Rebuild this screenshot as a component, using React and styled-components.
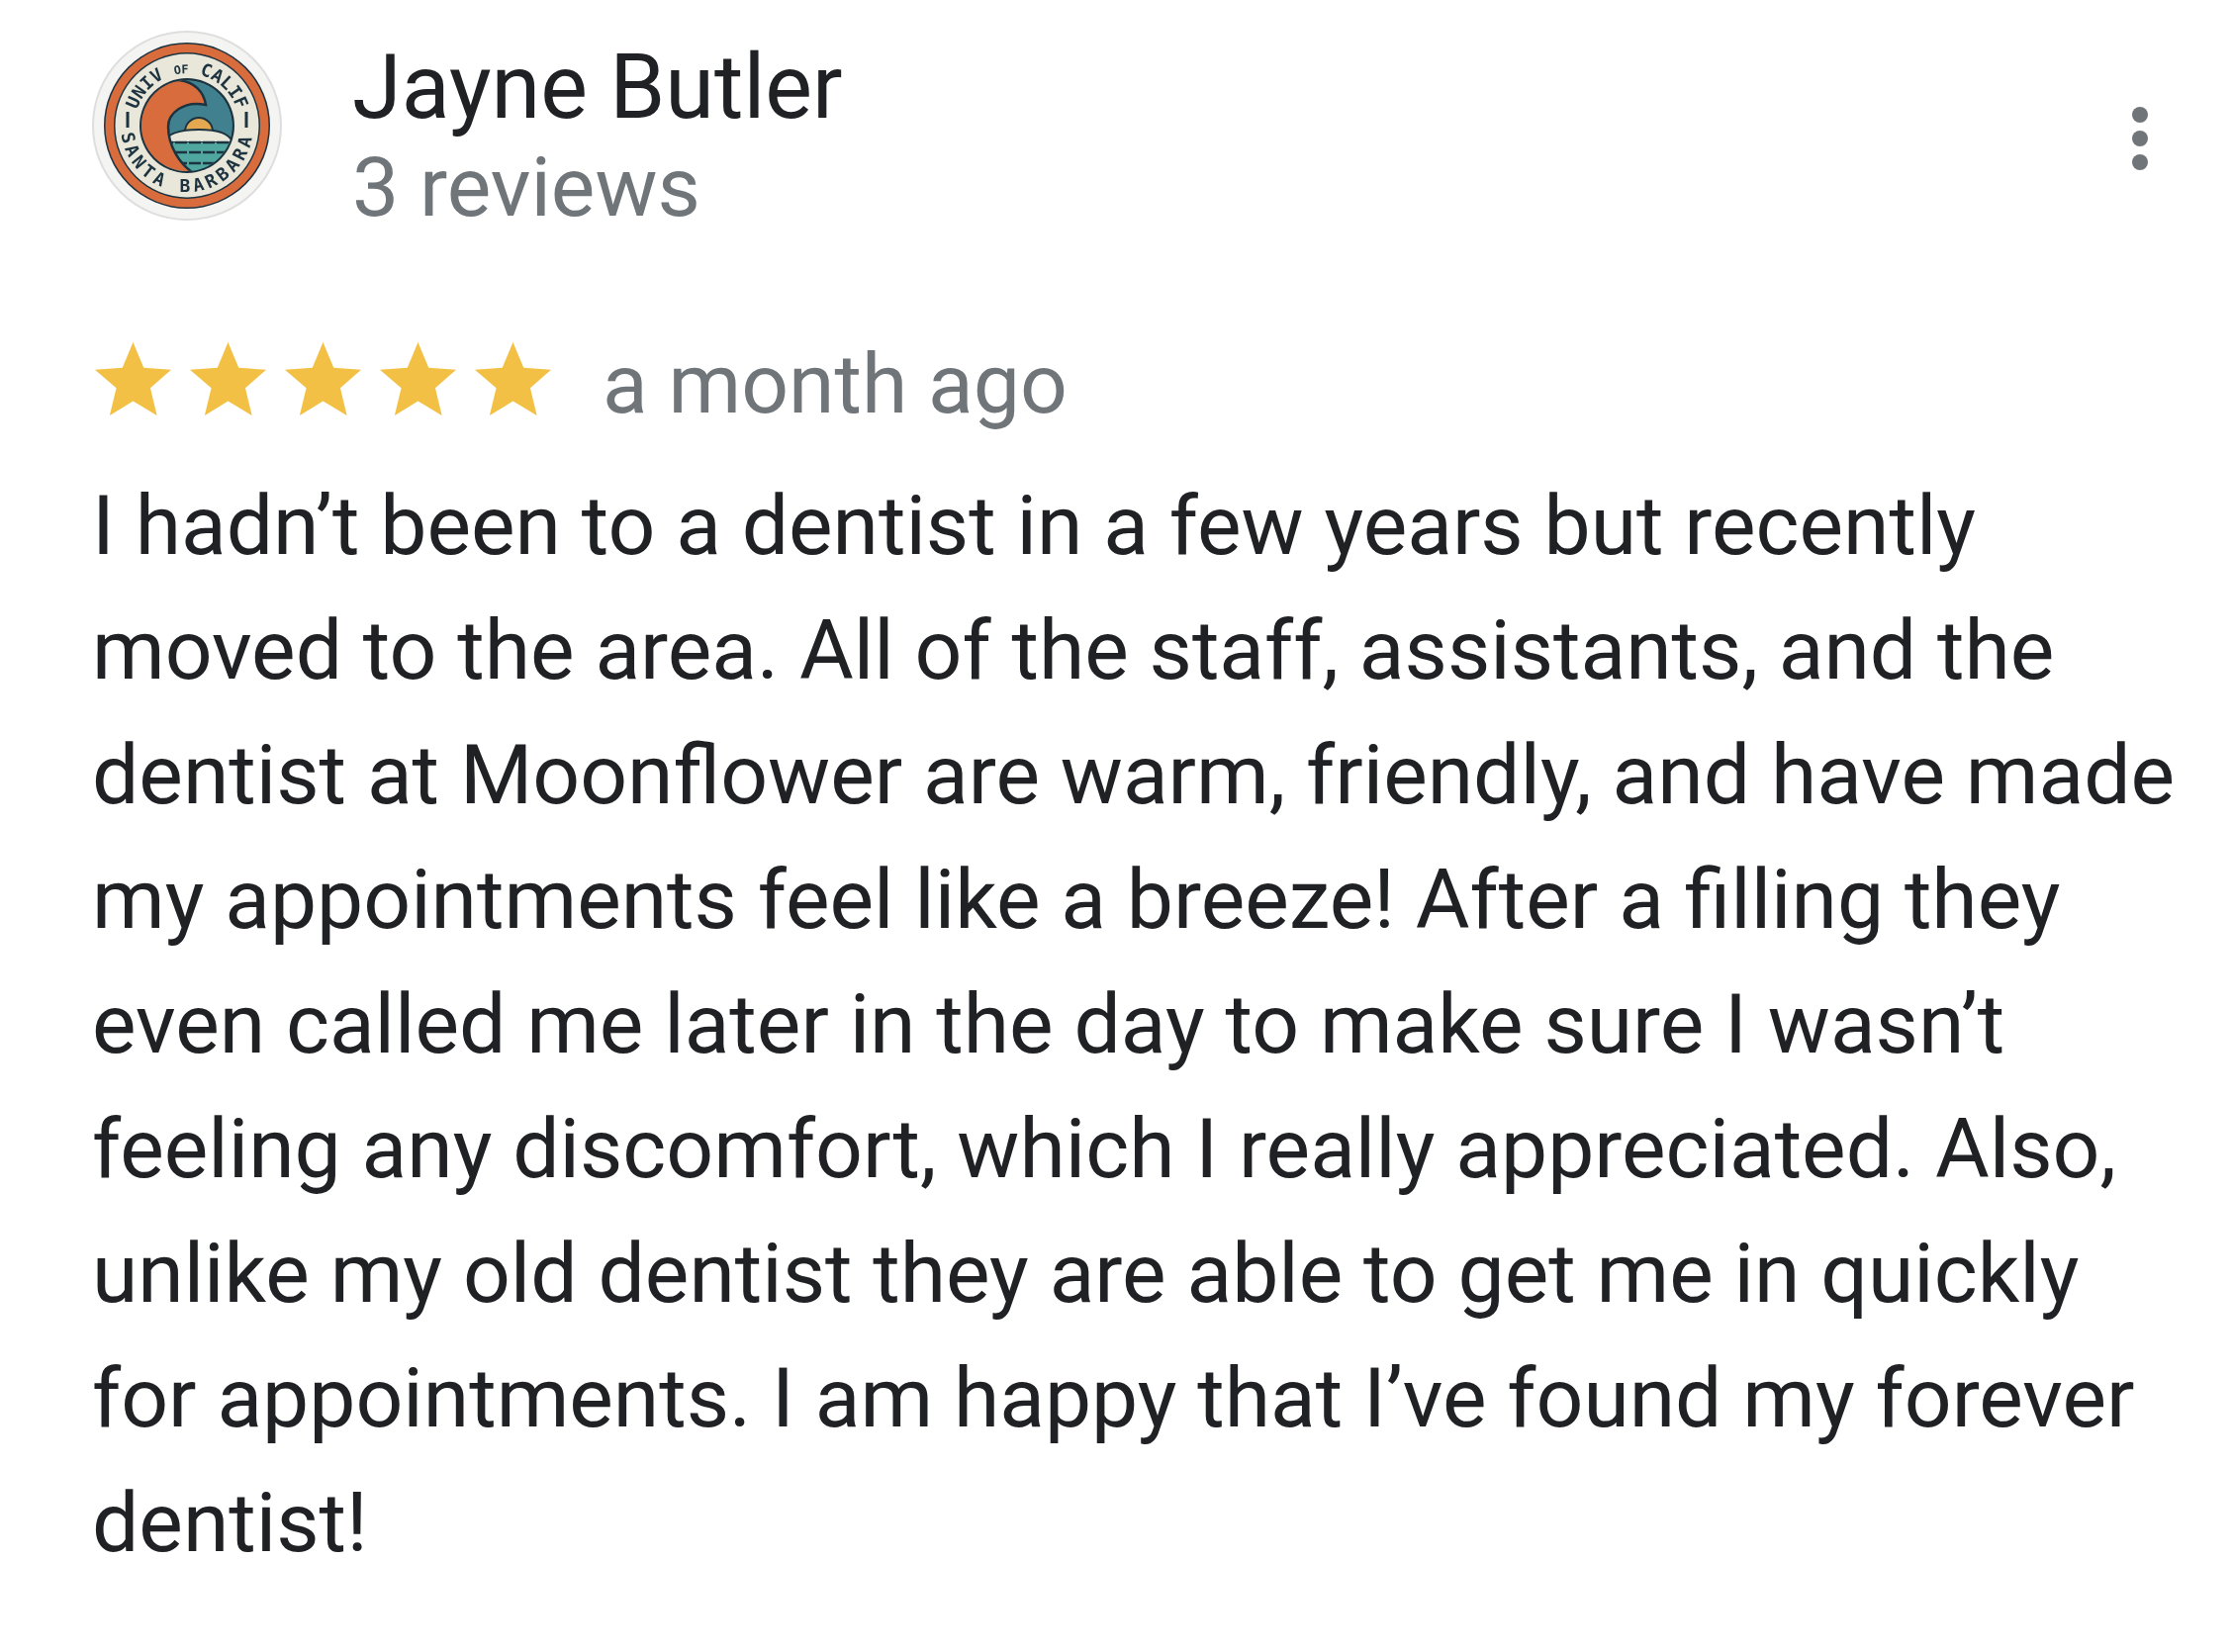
import React from "react";
import styled, { createGlobalStyle } from "styled-components";

const GlobalStyle = createGlobalStyle`
  html, body {
    margin: 0;
    background: #fff;
    font-family: Roboto, "Liberation Sans", sans-serif;
  }
`;

const App = () => (
  <>
    <GlobalStyle />
    <Review>
      <Header>
        <Avatar />
        <Author>
          <Name>Jayne Butler</Name>
          <Count>3 reviews</Count>
        </Author>
        <MoreButton>
          <Dot />
          <Dot />
          <Dot />
        </MoreButton>
      </Header>
      <Rating>
        <Stars>
          {[0, 1, 2, 3, 4].map((i) => (
            <Star key={i} />
          ))}
        </Stars>
        <When>a month ago</When>
      </Rating>
      <Body>
        I hadn’t been to a dentist in a few years but recently moved to the area. All of the staff, assistants, and the dentist at Moonflower are warm, friendly, and have made my appointments feel like a breeze! After a filling they even called me later in the day to make sure I wasn’t feeling any discomfort, which I really appreciated. Also, unlike my old dentist they are able to get me in quickly for appointments. I am happy that I’ve found my forever dentist!
      </Body>
    </Review>
  </>
);

export default App;

const Avatar = () => (
  <AvatarSvg viewBox="0 0 192 192">
    <defs>
      <path id="topArc" d="M 43 96 A 53 53 0 0 1 149 96" />
      <path id="bottomArc" d="M 29 96 A 67 67 0 0 0 163 96" />
      <clipPath id="inner">
        <circle cx="96" cy="96" r="46" />
      </clipPath>
    </defs>
    <circle cx="96" cy="96" r="95" fill="#f4f4f3" stroke="#dedede" strokeWidth="2" />
    <circle cx="96" cy="96" r="84" fill="#1d3440" />
    <circle cx="96" cy="96" r="82.5" fill="#d96c3c" />
    <circle cx="96" cy="96" r="74" fill="#1d3440" />
    <circle cx="96" cy="96" r="72.5" fill="#e9e6da" />
    <circle cx="96" cy="96" r="48" fill="#1d3440" />
    <g clipPath="url(#inner)">
      <circle cx="96" cy="96" r="46" fill="#41818f" />
      <circle cx="108" cy="102" r="14" fill="#e4a850" stroke="#1d3440" strokeWidth="2" />
      <path d="M 72 113 Q 78 100 108 100 Q 138 100 142 113 Z" fill="#e9e6da" stroke="#1d3440" strokeWidth="2" />
      <rect x="70" y="113" width="80" height="30" fill="#4fa79f" />
      <path d="M 70 113 H 146 M 70 123 H 146 M 70 134 H 146" stroke="#1d3440" strokeWidth="2.5" strokeDasharray="12 2" />
      <path d="M 115 75 C 113 62 104 52 88 50 L 40 50 L 40 145 L 104 145 C 88 135 77 116 77 97 C 77 84 92 70 115 75 Z" fill="#d96c3c" stroke="#1d3440" strokeWidth="2.5" />
    </g>
    <Lettering $spacing={0}>
      <textPath href="#topArc" startOffset="50%" textAnchor="middle">
        UNIV <tspan fontSize="12">OF</tspan> CALIF
      </textPath>
    </Lettering>
    <Lettering $spacing={4}>
      <textPath href="#bottomArc" startOffset="50%" textAnchor="middle">SANTA BARBARA</textPath>
    </Lettering>
    <path d="M 36 82 V 98 M 156 82 V 98" stroke="#1d3440" strokeWidth="3" />
  </AvatarSvg>
);

const Star = () => (
  <StarSvg viewBox="0 0 75 72">
    <path d="M37.5 0 L48 25 L75 27 L54.5 45 L61 72 L37.5 58 L14.5 72 L21 45 L0 27 L27 25 Z" fill="#f2c044" />
  </StarSvg>
);

const Review = styled.main`
  width: 2256px;
  height: 1670px;
  box-sizing: border-box;
  padding: 31px 0 0 93px;
  overflow: hidden;
`;

const Header = styled.header`
  display: flex;
  align-items: flex-start;
`;

const AvatarSvg = styled.svg`
  width: 192px;
  height: 192px;
  flex: none;
  margin-right: 71px;
  filter: blur(0.7px);
`;

const Lettering = styled.text`
  font-family: "DejaVu Sans Mono", monospace;
  font-weight: 700;
  font-size: 18px;
  letter-spacing: ${(p) => p.$spacing}px;
  fill: #1d3440;
`;

const Author = styled.div`
  flex: 1;
  display: flex;
  flex-direction: column;
  padding-top: 9px;
`;

const Name = styled.div`
  font-size: 90px;
  line-height: 98px;
  color: #202124;
`;

const Count = styled.div`
  font-size: 84px;
  line-height: 98px;
  margin-top: 3px;
  color: #70757a;
`;

const MoreButton = styled.div`
  display: flex;
  flex-direction: column;
  gap: 8px;
  margin: 77px 85px 0 0;
`;

const Dot = styled.span`
  width: 16px;
  height: 16px;
  border-radius: 50%;
  background: #70757a;
`;

const Rating = styled.div`
  display: flex;
  align-items: center;
  margin-top: 101px;
`;

const Stars = styled.div`
  display: flex;
  gap: 19px;
  margin: 0 52px 12px 3px;
`;

const StarSvg = styled.svg`
  width: 77px;
  height: 74px;
  display: block;
`;

const When = styled.span`
  font-size: 84px;
  line-height: 98px;
  color: #70757a;
`;

const Body = styled.p`
  margin: 31px 0 0;
  width: 2110px;
  font-size: 84px;
  line-height: 126px;
  color: #202124;
`;
